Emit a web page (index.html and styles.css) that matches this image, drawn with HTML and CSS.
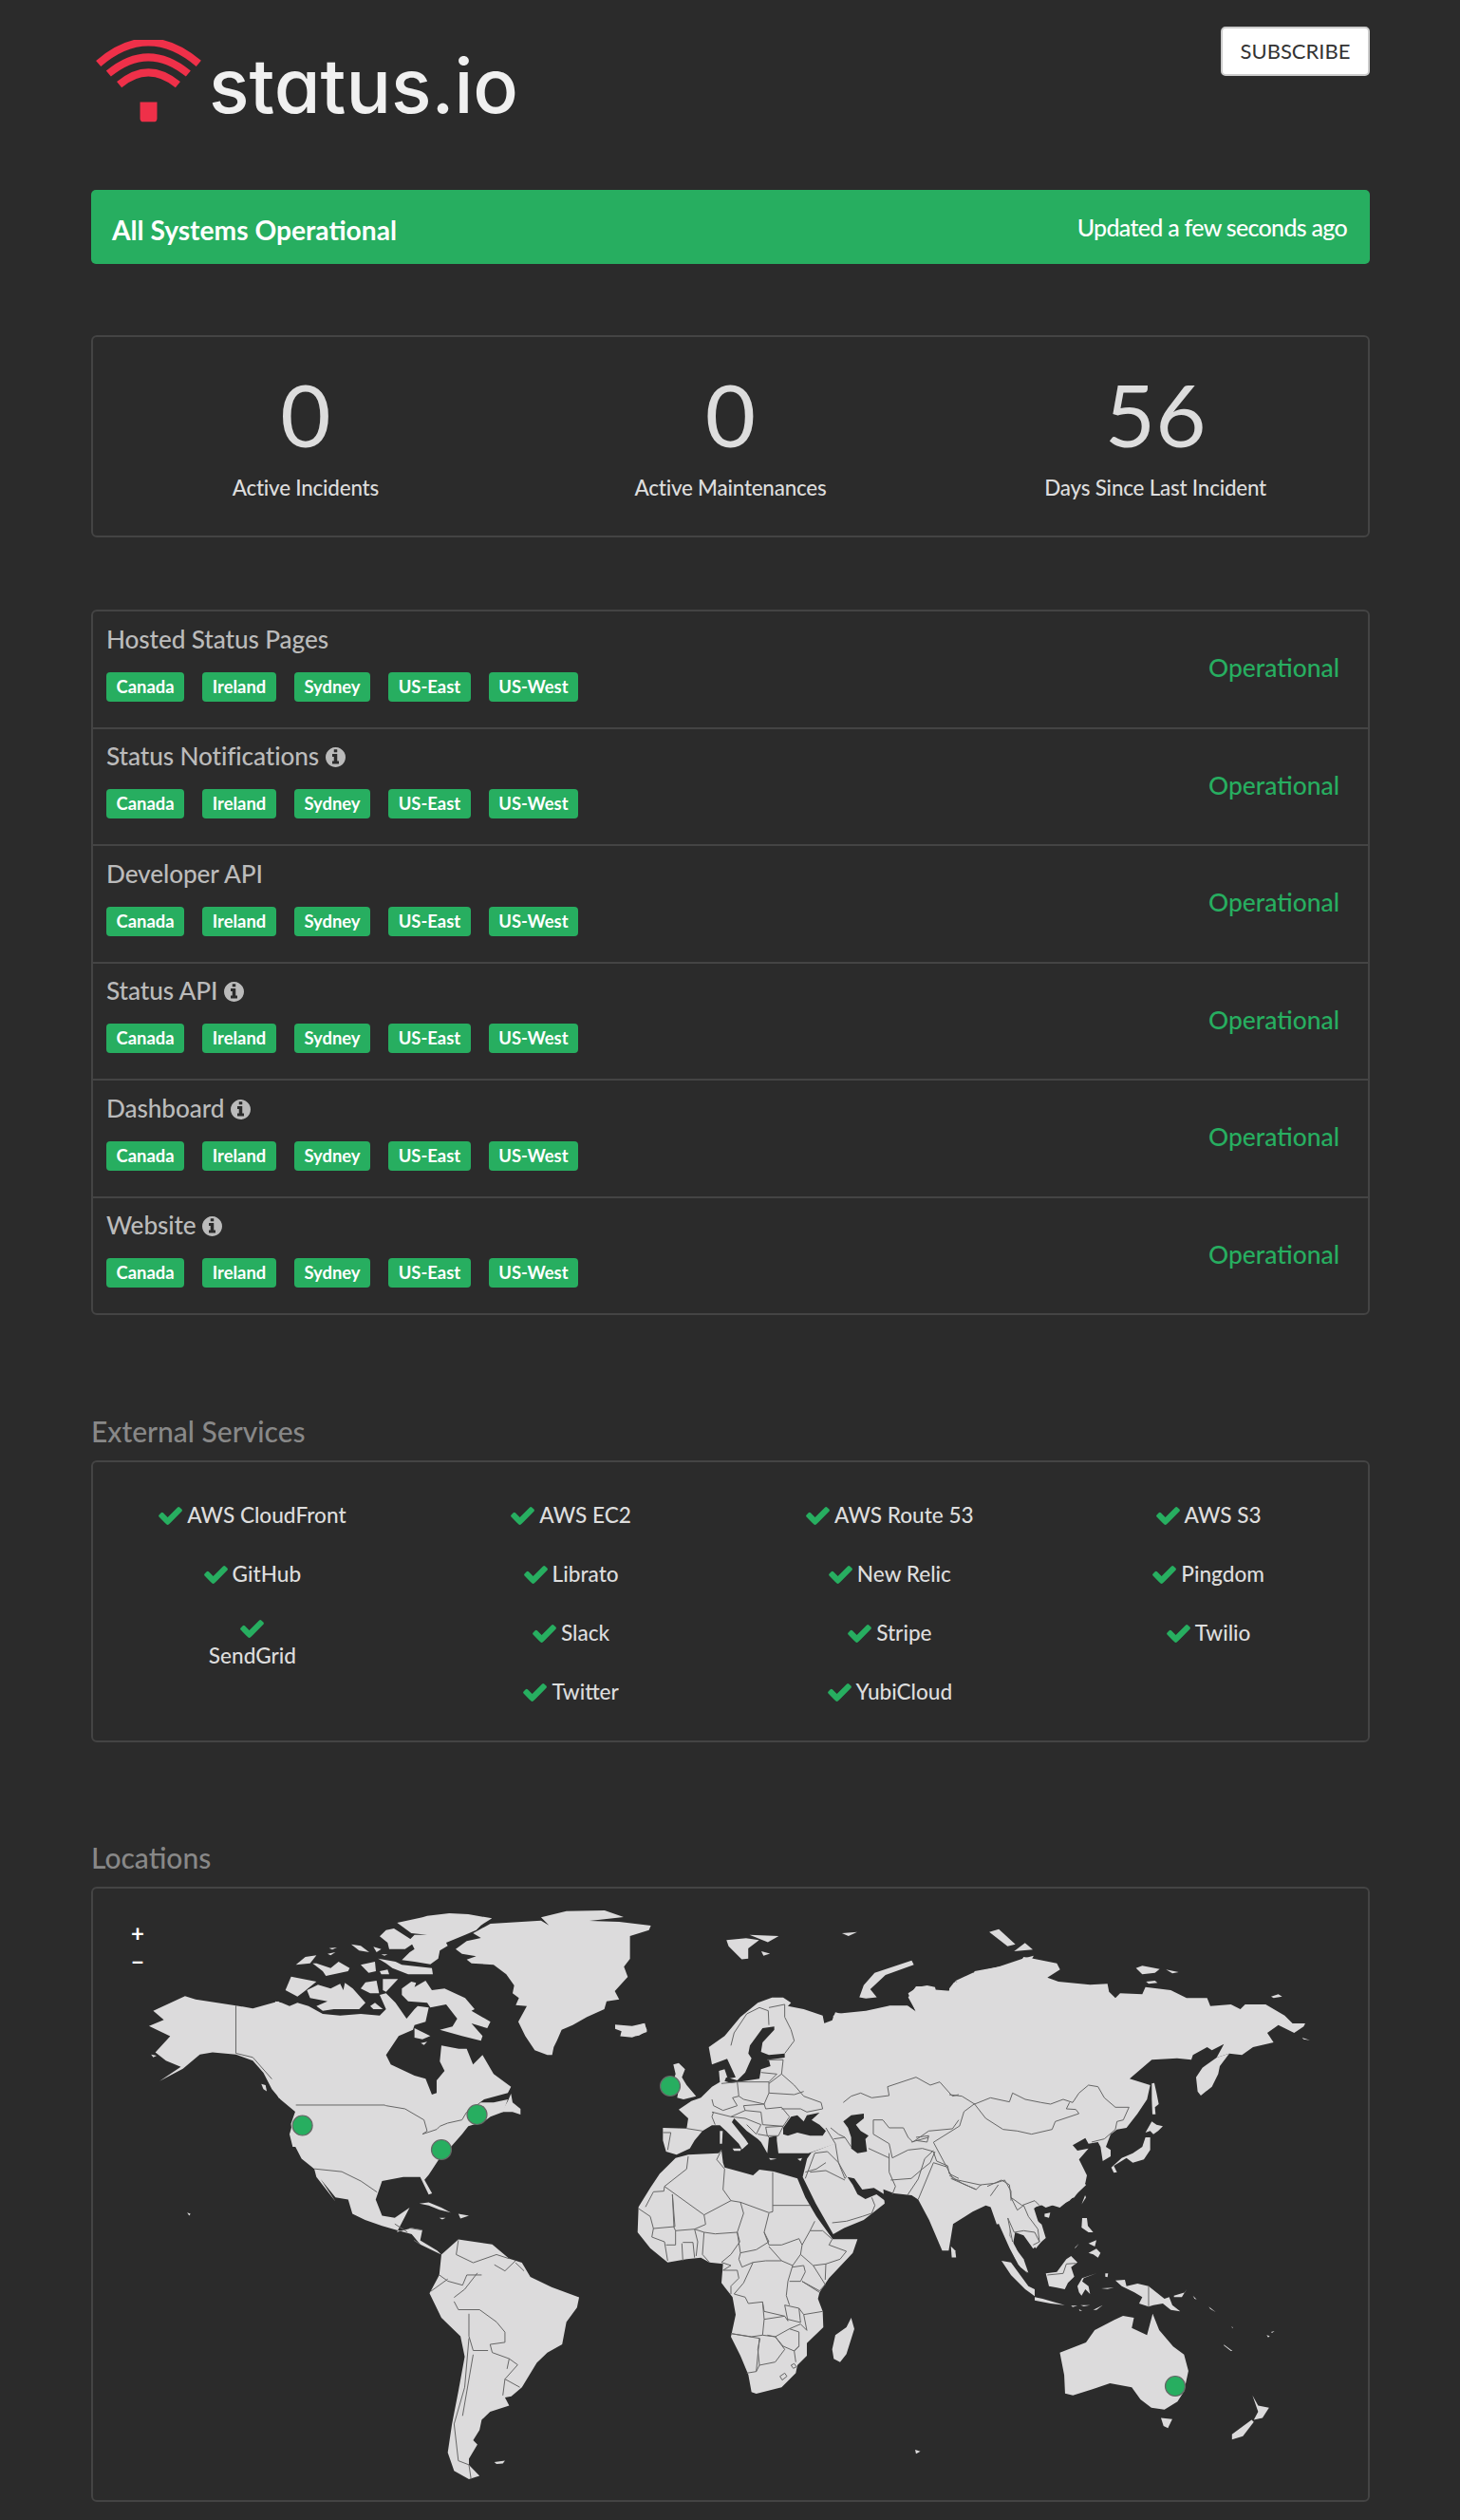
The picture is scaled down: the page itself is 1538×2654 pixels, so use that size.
FILE: index.html
```html
<!DOCTYPE html>
<html>
<head>
    <title>status.io</title>
    <link rel="stylesheet" href="styles.css">
</head>
<body>
    <svg class="defs">
        <symbol id="check" viewBox="121 334 1550 1188"><path d="M1671 566q0 40-28 68l-724 724-136 136q-28 28-68 28t-68-28l-136-136-362-362q-28-28-28-68t28-68l136-136q28-28 68-28t68 28l294 295 656-657q28-28 68-28t68 28l136 136q28 28 28 68z"/></symbol>
        <symbol id="info" viewBox="128 128 1536 1536"><path fill-rule="evenodd" d="M1152 1376v-160q0-14-9-23t-23-9h-96v-512q0-14-9-23t-23-9h-320q-14 0-23 9t-9 23v160q0 14 9 23t23 9h96v320h-96q-14 0-23 9t-9 23v160q0 14 9 23t23 9h448q14 0 23-9t9-23zm-128-896v-160q0-14-9-23t-23-9h-192q-14 0-23 9t-9 23v160q0 14 9 23t23 9h192q14 0 23-9t9-23zm640 416q0 209-103 385.5t-279.5 279.5-385.5 103-385.5-103-279.5-279.5-103-385.5 103-385.5 279.5-279.5 385.5-103 385.5 103 279.5 279.5 103 385.5z"/></symbol>
    </svg>

    <div class="page">
        <header class="header">
            <div class="logo">
                <svg class="logo-icon" viewBox="62 125 334 262">
                    <path class="logo-arc" d="M70 200Q228 64 388 200"/>
                    <path class="logo-arc" d="M102 232Q228 128 355 232"/>
                    <path class="logo-arc" d="M136 267Q228 190 322 267"/>
                    <path class="logo-stem" d="M202 322h54v52q0 11-11 11h-32q-11 0-11-11z"/>
                </svg>
                <span class="logo-text">status.io</span>
            </div>
            <a class="subscribe">SUBSCRIBE</a>
        </header>

        <div class="alert">
            <strong class="alert-title">All Systems Operational</strong>
            <span class="alert-time">Updated a few seconds ago</span>
        </div>

        <div class="card stats">
            <div class="stat"><div class="stat-number">0</div><div class="stat-label">Active Incidents</div></div>
            <div class="stat"><div class="stat-number">0</div><div class="stat-label">Active Maintenances</div></div>
            <div class="stat"><div class="stat-number">56</div><div class="stat-label">Days Since Last Incident</div></div>
        </div>

        <div class="card services">
            <div class="service">
                <div class="service-info">
                    <div class="service-name">Hosted Status Pages</div>
                    <div class="tags"><span class="tag">Canada</span><span class="tag">Ireland</span><span class="tag">Sydney</span><span class="tag">US-East</span><span class="tag">US-West</span></div>
                </div>
                <div class="service-status">Operational</div>
            </div>
            <div class="service">
                <div class="service-info">
                    <div class="service-name">Status Notifications <svg class="info"><use href="#info"/></svg></div>
                    <div class="tags"><span class="tag">Canada</span><span class="tag">Ireland</span><span class="tag">Sydney</span><span class="tag">US-East</span><span class="tag">US-West</span></div>
                </div>
                <div class="service-status">Operational</div>
            </div>
            <div class="service">
                <div class="service-info">
                    <div class="service-name">Developer API</div>
                    <div class="tags"><span class="tag">Canada</span><span class="tag">Ireland</span><span class="tag">Sydney</span><span class="tag">US-East</span><span class="tag">US-West</span></div>
                </div>
                <div class="service-status">Operational</div>
            </div>
            <div class="service">
                <div class="service-info">
                    <div class="service-name">Status API <svg class="info"><use href="#info"/></svg></div>
                    <div class="tags"><span class="tag">Canada</span><span class="tag">Ireland</span><span class="tag">Sydney</span><span class="tag">US-East</span><span class="tag">US-West</span></div>
                </div>
                <div class="service-status">Operational</div>
            </div>
            <div class="service">
                <div class="service-info">
                    <div class="service-name">Dashboard <svg class="info"><use href="#info"/></svg></div>
                    <div class="tags"><span class="tag">Canada</span><span class="tag">Ireland</span><span class="tag">Sydney</span><span class="tag">US-East</span><span class="tag">US-West</span></div>
                </div>
                <div class="service-status">Operational</div>
            </div>
            <div class="service">
                <div class="service-info">
                    <div class="service-name">Website <svg class="info"><use href="#info"/></svg></div>
                    <div class="tags"><span class="tag">Canada</span><span class="tag">Ireland</span><span class="tag">Sydney</span><span class="tag">US-East</span><span class="tag">US-West</span></div>
                </div>
                <div class="service-status">Operational</div>
            </div>
        </div>

        <h2 class="section-title">External Services</h2>
        <div class="card external">
            <div class="external-col">
                <div class="external-item"><svg class="check"><use href="#check"/></svg>AWS CloudFront</div>
                <div class="external-item"><svg class="check"><use href="#check"/></svg>GitHub</div>
                <div class="external-item wrapped"><svg class="check"><use href="#check"/></svg>SendGrid</div>
            </div>
            <div class="external-col">
                <div class="external-item"><svg class="check"><use href="#check"/></svg>AWS EC2</div>
                <div class="external-item"><svg class="check"><use href="#check"/></svg>Librato</div>
                <div class="external-item"><svg class="check"><use href="#check"/></svg>Slack</div>
                <div class="external-item"><svg class="check"><use href="#check"/></svg>Twitter</div>
            </div>
            <div class="external-col">
                <div class="external-item"><svg class="check"><use href="#check"/></svg>AWS Route 53</div>
                <div class="external-item"><svg class="check"><use href="#check"/></svg>New Relic</div>
                <div class="external-item"><svg class="check"><use href="#check"/></svg>Stripe</div>
                <div class="external-item"><svg class="check"><use href="#check"/></svg>YubiCloud</div>
            </div>
            <div class="external-col">
                <div class="external-item"><svg class="check"><use href="#check"/></svg>AWS S3</div>
                <div class="external-item"><svg class="check"><use href="#check"/></svg>Pingdom</div>
                <div class="external-item"><svg class="check"><use href="#check"/></svg>Twilio</div>
            </div>
        </div>

        <h2 class="section-title">Locations</h2>
        <div class="card locations">
            <div class="zoom-controls">
                <span>+</span>
                <span>&minus;</span>
            </div>
            <svg class="map" viewBox="98 1988 1343 644">
                <!-- Alaska, west coast, Central and South America -->
                <g transform="translate(90 1980) scale(.4464 .43)">
                    <path class="land" d="M160 318L235 282L260 290L355 305L395 312L455 295L860 635L835 680L810 720L800 732L818 765L810 768L790 725L750 725L700 735L685 780L700 820L730 825L765 800L750 830L735 860L770 850L795 855L790 880L830 905L840 915L820 905L790 890L770 865L735 855L700 845L660 830L630 815L620 780L590 775L555 730L590 785L545 725L540 705L510 680L490 640L485 595L495 565L460 535L440 510L420 470L395 440L355 425L300 420L270 425L230 460L175 490L225 455L190 440L165 420L200 380L150 355L185 340z"/>
                    <path class="land" d="M1250 352L1290 355L1320 348L1325 370L1290 383L1262 380L1265 368L1250 362z"/>
                    <path class="land" d="M155 425L168 428L160 432z"/>
                    <path class="land" d="M240 812L248 815L245 820z"/>
                    <path class="land" d="M415 497L425 500L428 515L420 510z"/>
                    <path class="land" d="M788 790L810 787L840 800L862 812L835 805L810 795z"/>
                    <path class="land" d="M880 815L905 820L885 827z"/>
                    <path class="land" d="M835 825L850 825L842 829z"/>
                    <path class="land" d="M965 1423L990 1420L985 1427L970 1428z"/>
                    <path class="land" d="M840 915L880 878L895 880L960 890L1000 925L1030 935L1050 970L1100 995L1165 1020L1160 1045L1135 1080L1125 1135L1090 1155L1065 1180L1030 1240L1005 1262L990 1265L1000 1285L955 1300L935 1320L930 1345L915 1370L925 1380L905 1415L905 1430L930 1457L905 1465L870 1445L855 1400L865 1330L880 1250L895 1165L885 1115L840 1070L812 1010L835 965z"/>
                    <path class="border" d="M355 305V422L395 432L440 485M540 705L605 712L650 735L688 762M730 840L760 860M765 850L795 855M775 880L790 890"/>
                    <path class="border" d="M880 880L875 915L915 935L970 915L1000 925M965 940L990 955L1015 930M1015 935L1035 955M835 965L855 980L890 990L900 965L935 965M815 1005L855 975M870 1020L895 1000L925 960M870 1030L880 1050L930 1050L970 1080L990 1105L990 1130L955 1135L960 1155L1000 1170L1020 1185L990 1220L1025 1240M905 1060L905 1115L915 1150L950 1150M905 1120L895 1240L870 1330L880 1420L905 1430L910 1465M915 1160L890 1310M1000 1170L995 1195M990 1220L985 1260"/>
                </g>
                <!-- Canada, Arctic islands, Greenland -->
                <g transform="translate(290 2000) scale(.3333)">
                    <path class="land" d="M0 320L20 325L45 335L70 325L105 335L150 360L205 365L270 360L330 365L350 345L330 300L350 295L380 325L415 375L440 345L450 335L485 340L475 385L440 395L435 410L390 430L350 490L365 520L440 555L475 565L495 615L510 610L510 570L535 540L520 510L525 460L580 470L605 470L625 520L655 490L690 550L745 590L735 610L660 630L600 675L650 640L690 640L735 630L720 670L680 685L660 700L610 715L590 740L555 780H55L45 740L65 670L50 640L10 625L0 600z"/>
                    <path class="land" d="M400 280L430 258L445 262L440 275L475 255L495 285L535 280L600 310L630 345L620 350L680 385L670 405L620 390L655 430L650 445L590 430L520 410L560 400L575 375L540 330L490 340L480 325L420 320L400 300z"/>
                    <path class="land" d="M440 405L490 430L465 440L440 435z"/>
                    <path class="land" d="M460 452L480 448L470 458z"/>
                    <path class="land" d="M100 285L135 268L175 280L205 265L215 285L220 262L245 280L285 325L265 345L185 345L150 350L130 335L165 320L110 310z"/>
                    <path class="land" d="M32 285L50 242L130 258L90 290L70 305z"/>
                    <path class="land" d="M65 205L95 180L130 175L110 200z"/>
                    <path class="land" d="M118 200L130 200L175 215L200 195L235 215L230 225L160 240L150 225z"/>
                    <path class="land" d="M270 205L315 195L318 225L295 230z"/>
                    <path class="land" d="M330 225L355 220L360 235L335 235z"/>
                    <path class="land" d="M325 185L380 195L400 205L495 215L498 235L420 235L370 215L350 200z"/>
                    <path class="land" d="M285 260L320 255L328 295L300 295L270 280z"/>
                    <path class="land" d="M340 250L388 250L350 290L340 285z"/>
                    <path class="land" d="M300 335L315 325L340 345L310 345z"/>
                    <path class="land" d="M165 170L190 165L175 175z"/>
                    <path class="land" d="M170 152L195 150L180 157z"/>
                    <path class="land" d="M240 140L270 145L297 165L265 160z"/>
                    <path class="land" d="M310 148L335 155L320 165z"/>
                    <path class="land" d="M335 172L355 172L345 176z"/>
                    <path class="land" d="M330 115L350 95L375 90L430 125L440 135L410 155L360 155L355 135z"/>
                    <path class="land" d="M385 72L465 55L480 50L550 42L610 45L685 58L650 80L635 95L600 110L540 135L545 145L520 160L515 185L490 203L440 195L400 190L425 165L440 155L425 125L440 110L480 110L430 105z"/>
                    <path class="land" d="M570 155L605 130L650 120L625 105L680 75L840 65L865 80L840 55L920 35L1041 33L1101 54L993 66L1087 69L1187 81L1181 95L1121 114L1121 186L1102 211L1114 243L1073 288L1087 314L1047 320L1040 345L985 370L940 395L905 410L890 445L880 465L875 490L860 490L820 475L790 430L768 385L795 335L760 332L770 310L750 295L755 270L730 235L690 205L620 200L605 188L635 178L590 170z"/>
                    <path class="land" d="M735 635L745 612L750 640L775 660L775 678L750 670L715 670z"/>
                    <path class="border" d="M65 648H345L350 650L410 660L470 695L480 730L465 740L510 725L520 715L545 705L590 695L605 670"/>
                </g>
                <!-- Asia west of the Far East, Arctic islands, Australia -->
                <g transform="translate(740 1980) scale(.4591 .43)">
                    <path class="land" d="M310 325L375 318L430 305L470 305L490 320L472 285L490 258L515 258L520 265L575 270L580 245L880 745L860 765L820 800L790 790L760 800L775 850L780 880L765 900L735 850L705 840L705 870L720 900L745 960L725 940L705 900L680 840L665 800L650 795L620 810L575 840L565 905L550 905L520 830L495 780L480 770L440 765L415 755L418 790L370 830L325 850L300 865L260 790L230 725L240 680L250 665L310 640L300 330z"/>
                    <path class="land" d="M580 245L620 225L680 210L735 190L760 183L700 300z"/>
                    <path class="land" d="M878 770L880 775L870 792z"/>
                    <path class="land" d="M785 815L798 812L795 825L785 822z"/>
                    <path class="land" d="M570 895L580 905L582 922L572 922z"/>
                    <path class="land" d="M360 285L370 255L395 225L480 195L485 205L420 230L385 265L400 285L375 288z"/>
                    <path class="land" d="M55 145L100 140L130 145L105 165L105 190L90 192L60 160z"/>
                    <path class="land" d="M108 132L175 135L150 150z"/>
                    <path class="land" d="M135 172L155 178L140 183z"/>
                    <path class="land" d="M320 128L355 125L335 135z"/>
                    <path class="land" d="M658 125L680 118L718 155L700 160z"/>
                    <path class="land" d="M715 172L740 152L758 168z"/>
                    <path class="land" d="M820 1155L880 1130L900 1100L945 1075L965 1065L990 1070L985 1095L1020 1112L1033 1060L1048 1100L1080 1140L1105 1160L1115 1200L1105 1250L1090 1275L1060 1295L1030 1290L1005 1270L985 1240L935 1230L895 1245L850 1260L832 1255L830 1210z"/>
                    <path class="land" d="M1052 1315L1078 1318L1068 1340L1058 1335z"/>
                    <path class="land" d="M1262 1260L1275 1285L1300 1290L1285 1315L1265 1320L1275 1300z"/>
                    <path class="land" d="M1260 1320L1265 1325L1240 1360L1215 1368L1215 1355z"/>
                    <path class="land" d="M488 1393L500 1397L490 1403z"/>
                </g>
                <!-- Far East -->
                <g transform="translate(1000 2060) scale(.3333)">
                    <path class="land" d="M0 100L15 80L70 70L80 45L175 28L225 15L235 0L265 5L340 20L350 40L310 65L345 78L445 88L500 85L505 110L525 130L540 115L610 118L620 95L700 105L750 130L815 130L825 155L890 150L920 165L935 150L1000 150L1060 185L1085 210L1125 210L1120 220L1090 240L1040 215L1005 240L1025 270L960 285L925 310L885 305L845 318L868 275L830 295L815 285L770 310L765 325L720 320L640 325L570 385L635 405L625 450L595 495L560 540L530 545L510 560L495 600L510 610L510 630L485 645L478 600L470 585L440 590L430 572L390 595L405 612L440 605L410 640L435 690L430 715L380 770L360 780H0z"/>
                    <path class="land" d="M780 380L800 350L845 318L885 305L855 345L850 370L830 410L795 438L785 425z"/>
                    <path class="land" d="M640 400L648 398L655 430L662 465L650 475L652 497L642 497L640 450z"/>
                    <path class="land" d="M620 555L640 520L655 530L675 535L660 550L645 560L635 550z"/>
                    <path class="land" d="M620 570L635 570L635 610L615 640L580 650L560 635L520 660L530 680L520 682L512 665L545 635L580 620L610 600z"/>
                    <path class="land" d="M590 35L610 28L665 38L650 50L610 55z"/>
                    <path class="land" d="M685 40L725 48L705 52z"/>
                    <path class="land" d="M622 78L650 75L658 82L630 85z"/>
                    <path class="land" d="M1017 125L1040 118L1052 125L1025 130z"/>
                    <path class="land" d="M1115 255L1140 263L1120 260z"/>
                </g>
                <!-- South East Asia, Pacific -->
                <g transform="translate(1040 2250) scale(.3333)">
                    <path class="land" d="M0 190L30 275L60 265L70 290L75 330L80 345L88 300L115 310L145 352L185 318L172 275L130 240L165 210L185 222L235 205L275 190L300 155L310 120L200 100L0 100z"/>
                    <path class="land" d="M45 390L75 395L130 470L150 480L150 502L120 480L75 435z"/>
                    <path class="land" d="M75 350L85 345L115 385L130 428L105 410L85 375z"/>
                    <path class="land" d="M185 430L220 425L250 385L265 375L285 395L265 410L275 440L255 460L245 480L220 475L195 470z"/>
                    <path class="land" d="M285 470L300 445L345 430L305 445L300 455L320 470L325 495L310 480L298 500L290 490z"/>
                    <path class="land" d="M150 505L175 510L245 530L200 525L150 515z"/>
                    <path class="land" d="M265 532L285 532L270 536z"/>
                    <path class="land" d="M295 530L325 530L305 534z"/>
                    <path class="land" d="M290 543L300 548L292 548z"/>
                    <path class="land" d="M335 545L365 530L345 545z"/>
                    <path class="land" d="M300 255L315 255L318 280L335 300L320 300L298 285z"/>
                    <path class="land" d="M320 365L345 352L358 365L350 380L335 370z"/>
                    <path class="land" d="M320 335L345 325L340 345z"/>
                    <path class="land" d="M275 350L290 335L280 348z"/>
                    <path class="land" d="M405 452L435 450L440 470L475 462L510 470L560 510L575 505L585 530L610 550L580 545L555 525L525 530L510 535L480 525L490 505L465 490L425 470z"/>
                    <path class="land" d="M373 430L382 430L380 442L373 440z"/>
                    <path class="land" d="M360 477L400 475L380 479z"/>
                    <path class="land" d="M590 500L625 490L630 480L615 505L590 505z"/>
                    <path class="land" d="M650 500L662 512L655 510z"/>
                    <path class="land" d="M700 535L722 552L705 542z"/>
                    <path class="land" d="M772 598L776 600L775 604z"/>
                    <path class="land" d="M748 655L775 675L770 675L748 658z"/>
                    <path class="land" d="M883 625L893 628L888 632z"/>
                    <path class="land" d="M897 615L908 612L900 618z"/>
                </g>
                <!-- Africa -->
                <g transform="translate(660 2270) scale(.3333)">
                    <path class="land" d="M105 55L155 5L195 -5L291 -10L300 -20L305 20L310 35L400 60L420 42L465 48L540 70L565 130L600 190L640 245L652 262L690 262L730 262L715 305L640 385L610 430L605 450L620 490L622 540L570 590L570 630L540 660L535 685L490 730L410 750L395 745L385 690L360 630L330 570L345 500L335 445L300 400L305 340L262 335L235 320L190 325L130 335L75 290L35 240L38 160L75 100z"/>
                    <path class="land" d="M710 510L720 545L695 625L675 650L655 640L650 610L660 565L695 540z"/>
                </g>
                <!-- Europe, Middle East, with the inland seas -->
                <g transform="translate(670 2080) scale(.3333)">
                    <path class="land" d="M85 480L160 482L165 450L135 422L175 395L205 385L240 350L265 335L262 300L280 295L290 325L315 320L288 262L240 280L230 225L280 190L330 130L385 85L430 68L465 68L490 85L480 95L530 105L590 125L595 150L560 175L550 190L520 145L580 155L620 140L630 115L650 120L650 140L725 115L790 105L800 95L860 95L885 115L860 55L890 35L920 30L945 35L950 55L1000 45L1020 40V400L640 540L630 530L545 560L450 560L445 520L445 505L420 510L415 560L395 525L385 515L350 490L310 450L303 462L345 515L355 530L335 548L325 530L285 490L265 472L240 472L210 490L185 520L170 545L128 565L95 555L85 520z"/>
                    <path class="land" d="M118 280L135 275L155 295L145 320L160 345L190 380L150 390L130 385L135 360L110 355L125 310z"/>
                    <path class="land" d="M305 545L332 545L330 553L310 553z"/>
                    <path class="land" d="M265 490L274 490L272 530L265 530z"/>
                    <path class="land" d="M420 575L445 578L425 581z"/>
                    <path class="land" d="M510 578L525 575L520 585z"/>
                    <path class="land" d="M0 158L25 150L35 172L10 188L0 190z"/>
                    <path class="sea" d="M437 160L400 165L360 220L355 245L365 260L345 305L320 330L285 320L280 332L300 338L390 325L395 295L425 285L420 265L470 258L470 245L420 250L395 240L400 210L437 170z"/>
                    <path class="sea" d="M465 480L490 445L510 440L530 460L540 440L580 432L555 455L580 470L600 490L590 505L550 505L510 495L480 505L465 500z"/>
                    <path class="sea" d="M655 460L680 440L720 435L720 450L695 470L710 490L735 505L725 515L730 555L700 560L680 545L680 510L670 480z"/>
                    <path class="sea" d="M668 635L690 640L715 675L752 670L785 690L880 700L890 720L800 720L760 690L725 705L700 690L685 660z"/>
                    <path class="border" d="M300 220L310 180L350 120L390 100L418 110L420 155M420 100L470 90L470 130L490 170L500 205L470 245M415 265L465 265L460 310L500 345L530 380L585 400L590 420L540 430L520 420L460 420M395 305L445 310L420 335M420 340L460 310M320 335L420 335L420 370L405 405L340 390L325 380L320 335M270 340L320 335M325 380L305 385L320 410L275 425L245 410L240 390M245 430L240 445L250 470M85 495L110 495L100 550M160 482L210 490M240 430L300 445L345 425L340 410L405 405M420 370L500 375L530 365M405 405L410 420L460 415L485 445L465 475L400 470L395 430L345 425M410 478L465 475L450 505L415 505L410 478M345 450L395 470L380 500L350 470M345 450L300 445M385 500L415 505L420 510M630 530L600 480M630 530L640 590L665 635L660 640L640 590L605 555L565 560L535 640M535 620L570 610L600 590M655 400L680 380L710 370L745 385L800 378L795 350L885 320L930 345L960 335L1000 380L1020 375M750 500V455L780 455L800 480L845 480L860 510L875 525L925 490L1000 483L1020 455M750 500L800 530L810 575L860 550L905 545L940 555L950 585L985 600L990 625L1020 640M800 560L800 620L820 665L810 690M805 645L870 640L905 610L930 590L945 555M800 575L735 545M870 525L925 510M885 510L925 505L920 525L885 520M615 480L640 500L660 510M625 515L660 510L680 540"/>
                </g>
                <!-- borders, on top of all the land -->
                <g transform="translate(660 2270) scale(.3333)">
                    <path class="border" d="M120 95L190 40L195 0M120 95L245 185L330 140L305 105L310 40L285 10L300 -20M245 185L250 215L215 230L155 235L150 225L145 120M145 120L153 222L85 228L75 190L38 165M120 95L118 110L85 112L60 160M330 140L360 145L370 180L350 240L280 245L245 240L215 230M360 145L450 178L462 175V50M462 155H580M350 240L360 305L410 295L450 270L435 240L450 180M435 240L450 280L490 280L545 260L555 280L580 235L595 205M580 235L620 235L650 262M555 280L550 310L590 345L630 340L675 325L695 300L640 280L650 262M630 340L628 390M360 305L355 325L365 350L400 335L440 330L490 330L525 345L550 310M450 285L490 330M245 240L240 310L262 335M350 240L358 270L330 310L300 335M215 230L225 270L220 315M85 228L80 255L120 270L125 300L130 330M155 235L155 280L125 280M175 275L178 330M178 272H210L215 320M400 335L370 400L340 435L375 445L385 465L430 460L435 490L500 505L510 520L500 470L545 480L550 525L510 515M525 345L510 395L505 440L515 470M525 350L560 345L565 365L550 395H515M590 345L628 405L610 425L555 395M555 395L610 430M560 500L620 490M545 480L560 500L570 550L550 530L515 545L545 555L545 600L530 615L535 650M430 460L435 515L430 565L395 570L330 560M435 515L500 505M515 545L470 570L430 565M470 570L495 600L530 615L545 600M445 565L470 570L500 610L470 650L420 660L415 610L422 575M330 560L420 575L410 680L380 685M420 660L410 680M520 660L530 655L537 665L527 670zM485 695L500 685L507 695L492 707zM305 360H350L355 385L330 410L330 435M300 335L330 345L305 360"/>
                    <path class="border" d="M650 210L695 205L745 190L775 180L785 155L775 130M580 50L630 45L690 75"/>
                </g>
                <g transform="translate(740 1980) scale(.4591 .43)">
                    <path class="border" d="M625 545L600 565L590 600L530 640L560 700L575 730L640 745M530 660L510 680L495 730L470 770M560 700L530 690L495 780"/>
                </g>
                <g transform="translate(1000 2060) scale(.3333)">
                    <path class="border" d="M80 465L130 445L190 458L200 430L240 450L290 460L320 465L360 450L390 460L410 430L440 405L470 410L490 445L525 475L568 475L550 515L530 520L525 545L490 575L450 585M0 435L40 440L80 465L115 510L170 545L215 550L260 560L325 545L335 520L410 495L400 482L370 480L380 460M0 690L40 715L85 735L100 720L145 715L175 705L195 740L195 770M5 700L85 735"/>
                </g>
                <g transform="translate(1040 2250) scale(.3333)">
                    <path class="border" d="M190 435L240 430L250 400L280 398M510 470V535M0 155L45 135L70 150L75 190L110 215L150 200L165 215M10 185L35 150M75 190L95 230L115 215L130 250L160 290L165 330M65 255L85 300L115 295L150 300L165 330L145 340M65 255L80 330"/>
                </g>
                <circle class="marker" cx="318.6" cy="2237.5" r="10.5"/>
                <circle class="marker" cx="465" cy="2263" r="10.5"/>
                <circle class="marker" cx="502.5" cy="2226" r="10.5"/>
                <circle class="marker" cx="706" cy="2196" r="10.5"/>
                <circle class="marker" cx="1238" cy="2512" r="10.5"/>
            </svg>
        </div>
    </div>
</body>
</html>
```

FILE: styles.css
```css
body {
    font-family: Lato, "Open Sans", sans-serif;
    font-weight: 500;
    background-color: #2b2b2b;
    color: #ddd;
    margin: 0;
    padding: 0;
}

.defs {
    display: none;
}

.page {
    padding: 0 95px 20px 96px;
}

.card {
    border: 2px solid #444;
    border-radius: 6px;
}

/* header */
.header {
    display: flex;
    justify-content: space-between;
    align-items: flex-start;
    height: 200px;
}

.logo {
    display: flex;
    align-items: flex-start;
    margin: 42px 0 0 5px;
}

.logo-icon {
    width: 111px;
    height: 87px;
}

.logo-arc {
    fill: none;
    stroke: #ef3049;
    stroke-width: 24;
}

.logo-stem {
    fill: #ef3049;
}

.logo-text {
    font-family: Inter, sans-serif;
    font-feature-settings: "cv11";
    font-size: 79px;
    font-weight: 500;
    line-height: 96px;
    color: #f0f0f0;
    margin-left: 8px;
}

.subscribe {
    box-sizing: border-box;
    width: 157px;
    height: 52px;
    margin-top: 28px;
    background-color: #fff;
    border: 2px solid #ccc;
    border-radius: 5px;
    color: #333;
    font-size: 22px;
    font-weight: 400;
    line-height: 48px;
    text-align: center;
}

/* status bar */
.alert {
    display: flex;
    justify-content: space-between;
    height: 78px;
    padding: 0 24px 0 22px;
    margin-bottom: 75px;
    background-color: #27ae60;
    border-radius: 5px;
    color: #fff;
}

.alert-title {
    font-size: 28.2px;
    line-height: 84px;
}

.alert-time {
    font-size: 25px;
    letter-spacing: -.7px;
    line-height: 78px;
}

/* stats */
.stats {
    display: flex;
    box-sizing: border-box;
    height: 213px;
    margin-bottom: 76px;
}

.stat {
    flex: 1;
    text-align: center;
}

.stat-number {
    font-size: 92px;
    font-weight: 400;
    line-height: 116px;
    margin-top: 23px;
}

.stat-label {
    font-size: 22.4px;
    letter-spacing: -.2px;
    line-height: 30px;
    margin-top: 5px;
}

/* services */
.services {
    display: flex;
    flex-direction: column;
    box-sizing: border-box;
    height: 743px;
    margin-bottom: 104px;
}

.service {
    flex: 1;
    display: flex;
    justify-content: space-between;
    align-items: center;
    padding: 0 30px 0 14px;
    border-bottom: 2px solid #444;
}

.service:last-child {
    border-bottom: none;
}

.service-info {
    padding-bottom: 14px;
}

.service-name {
    font-size: 26.2px;
    letter-spacing: -.1px;
    line-height: 36px;
    color: #bbb;
    margin-top: -2px;
}

.info {
    width: 21px;
    height: 21px;
    fill: #bbb;
    vertical-align: -2px;
}

.tags {
    display: flex;
    gap: 19px;
    margin-top: 17px;
}

.tag {
    height: 31px;
    padding: 0 10.6px;
    background-color: #27ae60;
    border-radius: 4px;
    color: #fff;
    font-size: 18.4px;
    font-weight: 700;
    line-height: 31px;
}

.service-status {
    font-size: 26.4px;
    padding-bottom: 3px;
    color: #27ae60;
}

/* external services */
.section-title {
    font-size: 30px;
    font-weight: 500;
    line-height: 36px;
    color: #888;
    margin: 0 0 13px;
}

.external {
    display: flex;
    box-sizing: border-box;
    height: 297px;
    padding-top: 36px;
    margin-bottom: 103px;
}

.external-col {
    flex: 1;
    text-align: center;
}

.external-item {
    height: 62px;
    font-size: 22.6px;
    line-height: 40px;
}

.check {
    width: 25px;
    height: 19px;
    margin-right: 5px;
    fill: #27ae60;
    vertical-align: -2px;
}

.wrapped .check {
    display: block;
    margin: 0 auto;
}

.wrapped {
    line-height: 38px;
    margin-top: 6px;
}

/* map */
.locations {
    position: relative;
    box-sizing: border-box;
    height: 648px;
}

.map {
    display: block;
    width: 100%;
    height: 100%;
}

.zoom-controls {
    position: absolute;
    left: 35px;
    top: 32px;
    display: flex;
    flex-direction: column;
    color: #fff;
    font-size: 24px;
    font-weight: 700;
    line-height: 30px;
    text-align: center;
    width: 24px;
}

.land {
    fill: #dcdbdc;
}

.sea {
    fill: #2b2b2b;
}

.border {
    fill: none;
    stroke: #666;
    stroke-width: 1;
    vector-effect: non-scaling-stroke;
}

.marker {
    fill: #27ae60;
    stroke: #666;
    stroke-width: 1.2;
}
```
